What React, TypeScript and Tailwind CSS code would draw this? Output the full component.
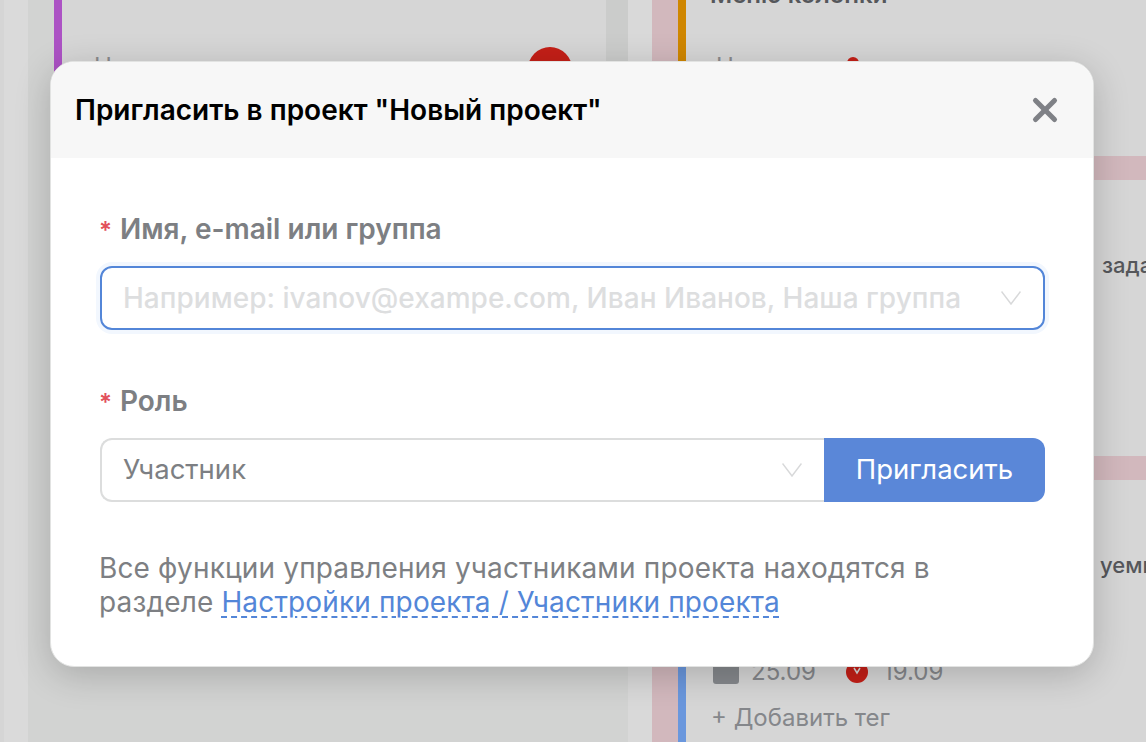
import React from 'react';
import { X } from 'lucide-react';

function Chevron({ className }: { className: string }) {
  return (
    <svg viewBox="0 0 20 14" fill="none" stroke="currentColor" strokeWidth="1.5" className={`w-[20px] h-[14px] shrink-0 ${className}`}>
      <path d="M0.5 0.5 L10 13 L19.5 0.5" />
    </svg>
  );
}

function Field({ label, children }: { label: string; children: React.ReactNode }) {
  return (
    <div>
      <div className="text-[28px] leading-[32px] font-semibold text-[#7d7f83] mb-[21px] whitespace-nowrap -ml-[1px]">
        <span className="text-[#e2505c] text-[24px] leading-none mr-[8px]">*</span>
        {label}
      </div>
      {children}
    </div>
  );
}

function Backdrop() {
  return (
    <div className="flex h-[742px] w-[1146px] bg-[#d5d5d5] overflow-hidden">
      <div className="w-[4px] shrink-0 bg-[#d5d5d5]" />
      <div className="w-[24px] shrink-0 bg-[#dadada]" />
      {/* left column */}
      <div className="w-[600px] shrink-0 flex flex-col bg-[#d2d3d2]">
        <div className="h-[300px] flex">
          <div className="w-[26px]" />
          <div className="w-[8px] bg-[#ac52c4]" />
          <div className="w-[544px] bg-[#d6d6d6] pl-[32px] pt-[51px] flex justify-between items-start">
            <span className="text-[24px] leading-[32px] text-[#8a8a8c]">Название</span>
            <div className="w-[44px] h-[44px] rounded-full bg-[#c41f17] mr-[34px] -mt-[4px]" />
          </div>
          <div className="w-[22px] bg-[#cbcccb]" />
        </div>
      </div>
      <div className="w-[24px] shrink-0 bg-[#d9d9d9]" />
      <div className="w-[26px] shrink-0 bg-[#d2b8bd]" />
      <div className="w-[8px] shrink-0 flex flex-col">
        <div className="h-[400px] bg-[#cf8600]" />
        <div className="flex-1 bg-[#6a97dd]" />
      </div>
      {/* right column */}
      <div className="flex-1 min-w-0 flex flex-col overflow-hidden bg-[#d6d6d6]">
        <div className="h-[156px] overflow-hidden">
          <div className="pl-[24px] -mt-[17px] text-[24px] font-semibold text-[#55575b] leading-[24px] whitespace-nowrap">Меню колонки</div>
          <div className="pl-[30px] pt-[44px] flex items-start text-[24px] leading-[32px] text-[#8a8a8c] whitespace-nowrap">
            <span>Название</span>
            <div className="w-[12px] h-[12px] rounded-full bg-[#c41f17] ml-[18px] mt-[6px]" />
          </div>
        </div>
        <div className="h-[24px] shrink-0 bg-[#d2b8bd]" />
        <div className="h-[276px] shrink-0 pt-[69px] pl-[416px] text-[22px] font-medium text-[#55575b] leading-[32px] whitespace-nowrap">задачи</div>
        <div className="h-[24px] shrink-0 bg-[#d2b8bd]" />
        <div className="pt-[69px] pl-[414px] text-[22px] font-medium text-[#55575b] leading-[32px] whitespace-nowrap">уемые</div>
        <div className="pl-[27px] pt-[75px] flex items-center text-[24px] leading-[32px] text-[#85878b]">
          <div className="w-[26px] h-[24px] rounded-[3px] bg-[#85888c] mr-[12px]" />
          <span>25.09</span>
          <svg viewBox="0 0 22 22" className="w-[22px] h-[22px] ml-[30px] mr-[15px]">
            <circle cx="11" cy="11" r="11" fill="#c41f17" />
            <path d="M8 7 L11 12 L14 7" fill="none" stroke="#d8d8d8" strokeWidth="1.5" />
          </svg>
          <span>19.09</span>
        </div>
        <div className="pl-[25px] pt-[14px] text-[24px] leading-[32px] text-[#85878b] whitespace-nowrap">+ Добавить тег</div>
      </div>
    </div>
  );
}

export default function App() {
  return (
    <div className="relative w-[1146px] h-[742px] overflow-hidden font-['Inter','Liberation_Sans',sans-serif]">
      <Backdrop />
      {/* Modal */}
      <div className="absolute left-[50px] top-[61px] w-[1044px] h-[606px] rounded-[24px] bg-white overflow-hidden border border-[#e2e3e2] shadow-[0_8px_36px_rgba(0,0,0,0.2)]">
        <div className="h-[96px] bg-[#f7f7f7] flex items-center justify-between pl-[24px] pr-[29px]">
          <h2 className="text-[28px] font-semibold text-black leading-[32px] whitespace-nowrap">Пригласить в проект "Новый проект"</h2>
          <X className="w-[38px] h-[38px] text-[#7f8186]" strokeWidth={3.2} />
        </div>
        <div className="pt-[55px] pl-[49px] pr-[48px]">
          <Field label="Имя, e-mail или группа">
            <div className="h-[64px] rounded-[12px] border-[2px] border-[#5386d8] ring-[4px] ring-[#f2f7fe] flex items-center justify-between pl-[21px] pr-[22px]">
              <span className="text-[28px] font-medium tracking-[0.02px] text-[#dddedf] whitespace-nowrap">Например: ivanov@exampe.com, Иван Иванов, Наша группа</span>
              <Chevron className="text-[#d8d9da]" />
            </div>
          </Field>
          <div className="mt-[55px]">
            <Field label="Роль">
              <div className="flex h-[64px]">
                <div className="flex-1 rounded-l-[12px] border-[2px] border-r-0 border-[#dcdddd] flex items-center justify-between pl-[21px] pr-[22px]">
                  <span className="text-[27.5px] text-[#7d7f83]">Участник</span>
                  <Chevron className="text-[#d8d9da]" />
                </div>
                <button className="w-[221px] rounded-r-[12px] bg-[#5a87d8] text-white text-[27.5px]">Пригласить</button>
              </div>
            </Field>
          </div>
          <p className="mt-[49px] -ml-[1px] text-[28px] tracking-[0.15px] leading-[34px] text-[#7d7f83] whitespace-nowrap">
            Все функции управления участниками проекта находятся в
            <br />
            разделе{' '}
            <a className="text-[#5386d8] underline decoration-dashed decoration-[2px] underline-offset-[4px]">Настройки проекта / Участники проекта</a>
          </p>
        </div>
      </div>
    </div>
  );
}
